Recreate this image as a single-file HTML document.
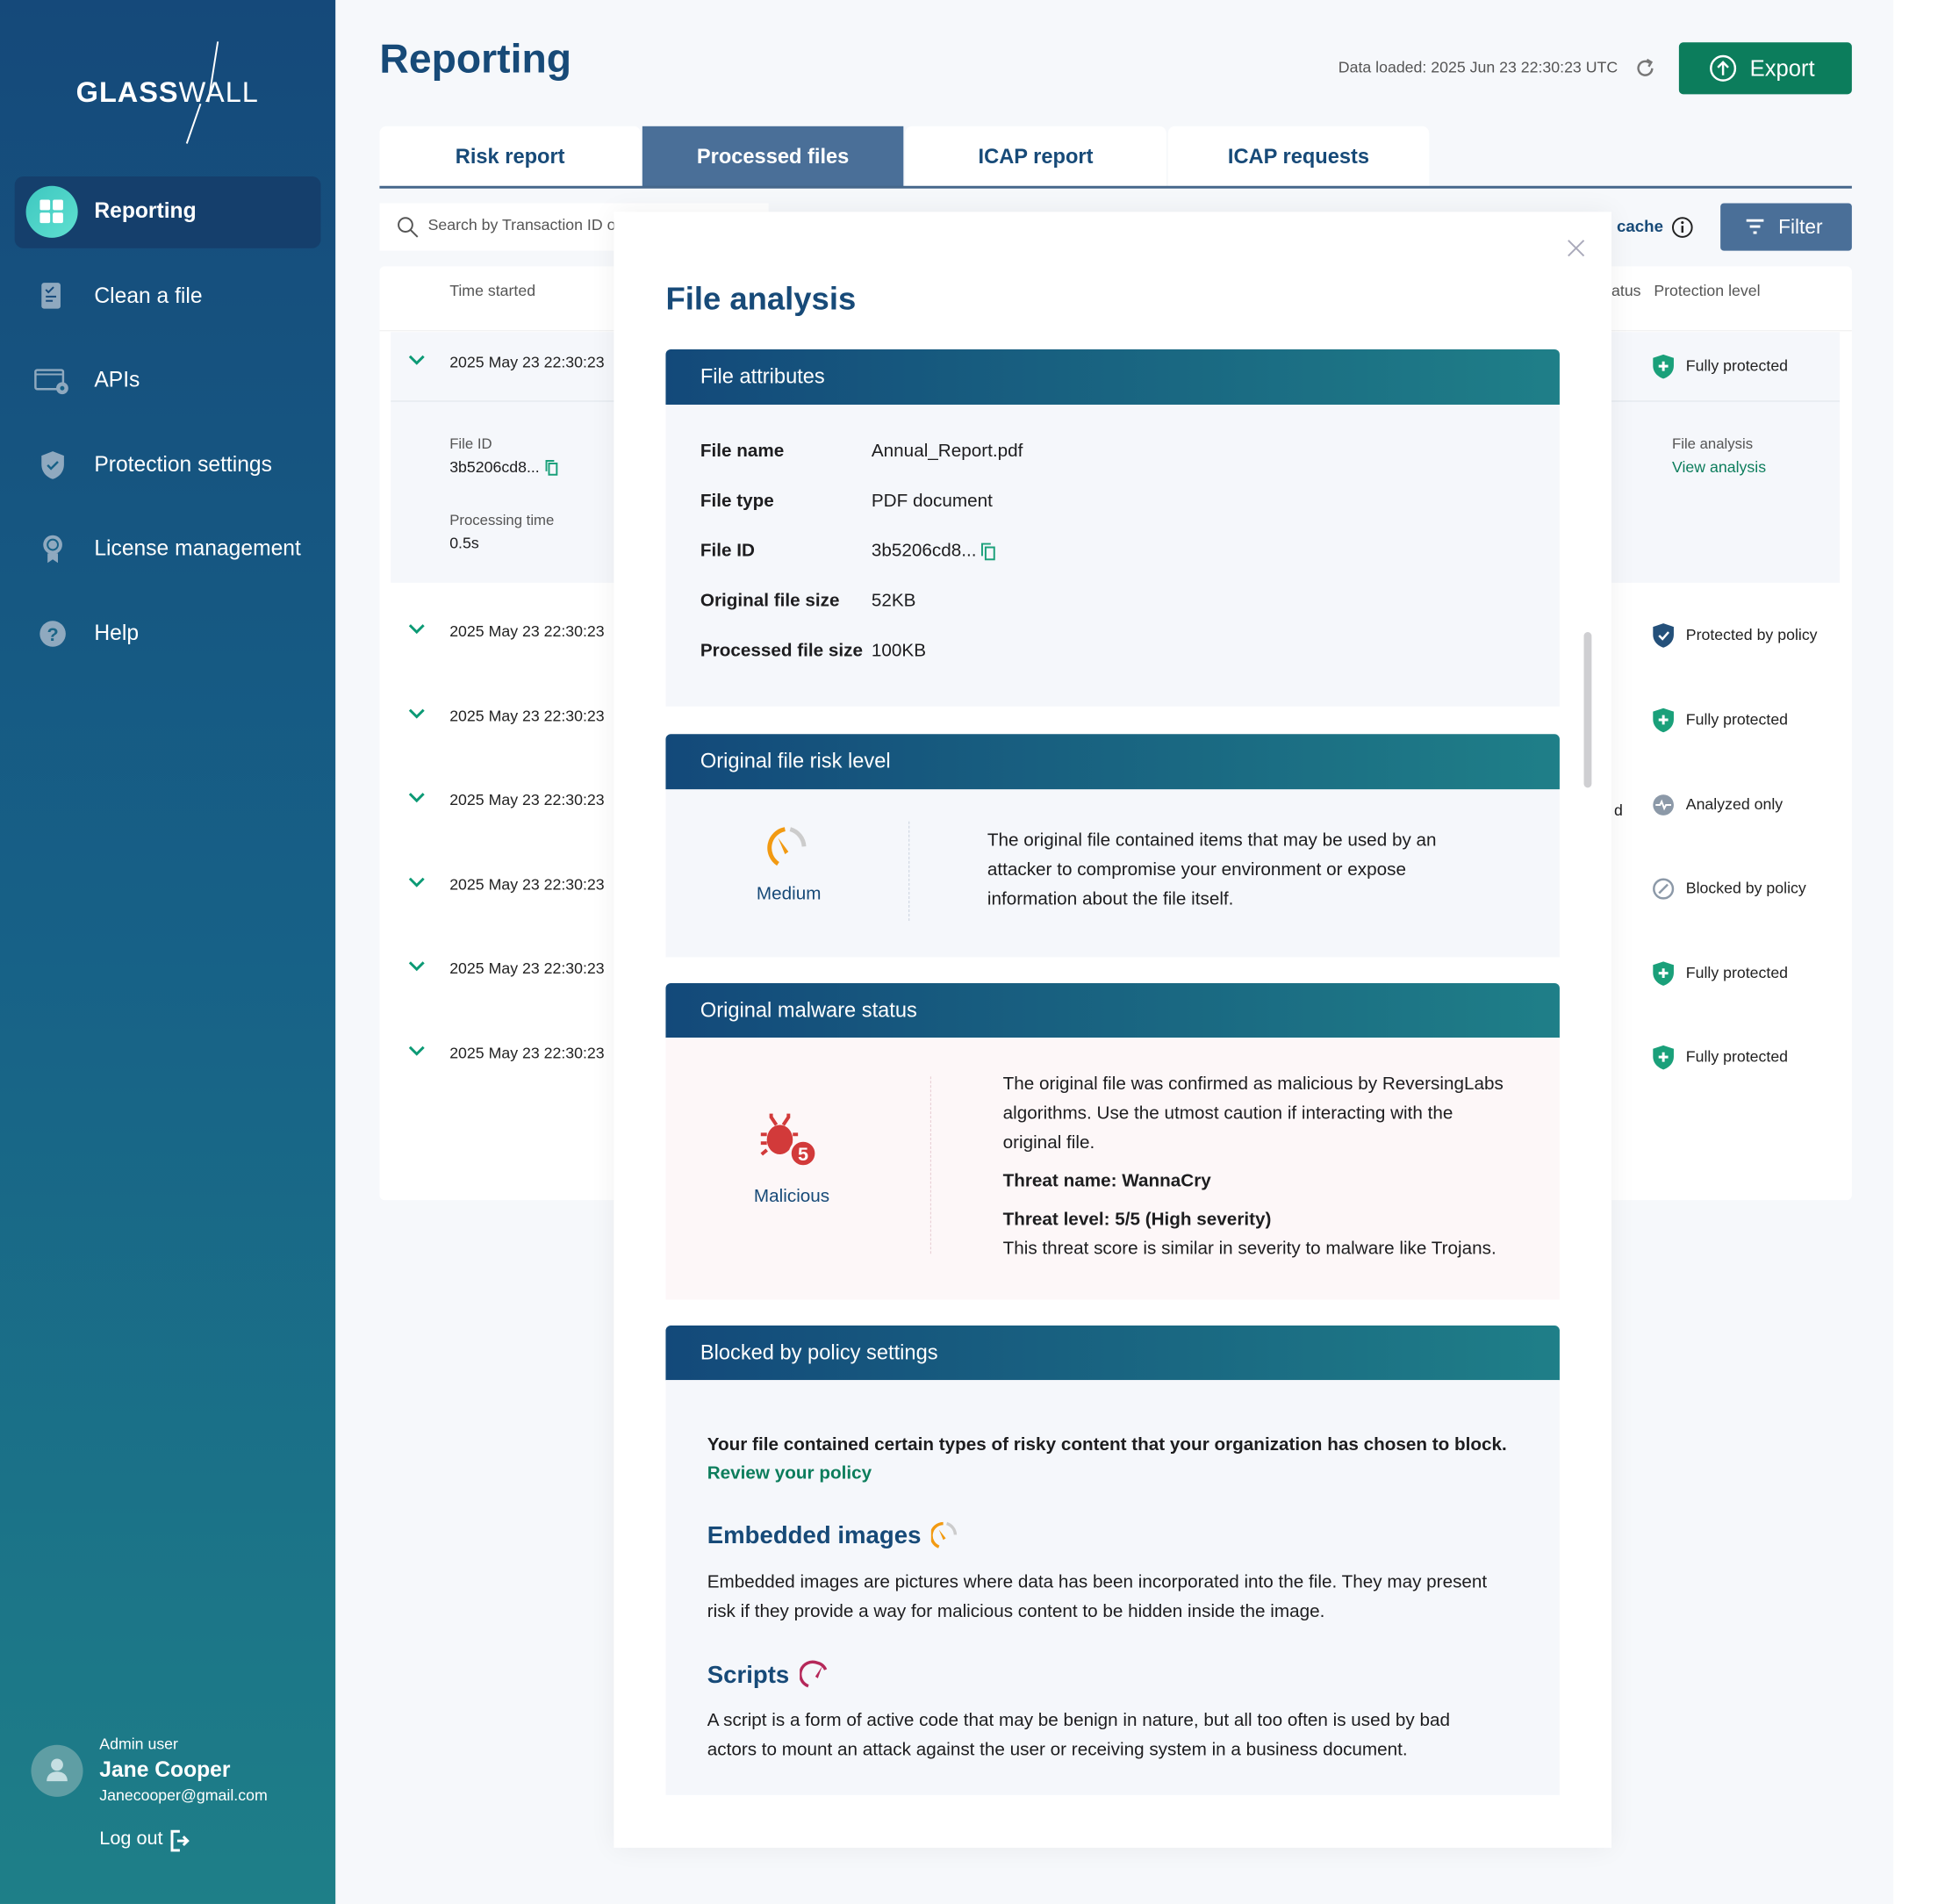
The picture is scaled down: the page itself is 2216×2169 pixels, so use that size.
<!DOCTYPE html>
<html><head><meta charset="utf-8"><style>
*{box-sizing:border-box;margin:0;padding:0}
body{width:2216px;height:2168px;position:relative;overflow:hidden;background:#fff;font-family:"Liberation Sans",sans-serif;color:#1d1d1f}
#wrap{position:absolute;left:0;top:0;width:2250px;height:2202px;transform:scale(0.985);transform-origin:0 0}
.a{position:absolute}
#main{left:388px;top:0;width:1802px;height:2202px;background:#f6f8fb}
#side{left:0;top:0;width:388px;height:2202px;background:linear-gradient(180deg,#15497a 0%,#176187 50%,#1e7f88 100%)}
.nav{position:absolute;left:0;width:388px;color:#fff;font-size:25px}
.nav .ic{position:absolute;left:44px;top:-18px;width:34px;height:36px}
.nav span{position:absolute;left:109px;top:-15px}
.tab{position:absolute;top:146px;height:70px;width:302px;background:#fff;color:#174a78;font-size:24px;text-align:center;line-height:72px;font-weight:bold;border-radius:8px 8px 0 0}
.row{position:absolute;left:452px;font-size:18px;color:#222}
.row .t{position:absolute;left:68px;top:-11px;white-space:nowrap}
.chev{position:absolute;left:20px;top:-10px;width:20px;height:14px}
.st{position:absolute;left:1910px;font-size:18px;color:#222}
.st svg{position:absolute;left:0;top:-14px}
.st span{position:absolute;left:40px;top:-10px;white-space:nowrap}
.hd{position:absolute;left:770px;width:1034px;height:64px;background:linear-gradient(90deg,#13497a,#1f7f88);color:#fff;font-size:24px;line-height:64px;padding-left:40px;border-radius:6px 6px 0 0}
.bd{position:absolute;left:770px;width:1034px;background:#f5f7fb}
.lb{position:absolute;left:810px;font-size:21px;font-weight:bold}
.vl{position:absolute;left:1008px;font-size:21px}
.p{font-size:21px;line-height:34px}
.h3{display:flex;align-items:center;gap:12px;font-size:28px;font-weight:bold;color:#174a78}
</style></head><body><div id="wrap">
<div class="a" id="main"></div>
<div class="a" id="side">
  <div class="a" style="left:88px;top:88px;color:#fff;font-size:33px;letter-spacing:1px"><b>GLASS</b>WALL</div>
  <svg class="a" style="left:210px;top:48px" width="50" height="120"><line x1="42" y1="0" x2="31" y2="70" stroke="#fff" stroke-width="2"/><line x1="22" y1="72" x2="6" y2="118" stroke="#fff" stroke-width="2"/></svg>
  <div class="a" style="left:17px;top:204px;width:354px;height:83px;background:#153f6c;border-radius:10px"></div>
  <div class="a" style="left:30px;top:215px;width:60px;height:60px;border-radius:50%;background:linear-gradient(135deg,#3ec7c0,#5fe0d0)"></div>
  <svg class="a" style="left:46px;top:231px" width="28" height="28"><rect x="0" y="0" width="12" height="12" rx="2" fill="#fff"/><rect x="15" y="0" width="12" height="12" rx="2" fill="#fff"/><rect x="0" y="15" width="12" height="12" rx="2" fill="#fff"/><rect x="15" y="15" width="12" height="12" rx="2" fill="#fff"/></svg>
  <div class="nav" style="top:245px"><span style="font-weight:bold">Reporting</span></div>
  <div class="nav" style="top:343px"><svg class="ic" viewBox="0 0 34 36"><rect x="4" y="2" width="22" height="30" rx="3" fill="#8fa9bf"/><path d="M9 10l3 3 6-6M9 18h12M9 23h8" stroke="#15497a" stroke-width="2" fill="none"/></svg><span>Clean a file</span></div>
  <div class="nav" style="top:440px"><svg class="ic" viewBox="0 0 40 36" style="left:38px;width:44px"><rect x="1" y="6" width="32" height="22" rx="2" fill="none" stroke="#8fa9bf" stroke-width="2.5"/><line x1="1" y1="11" x2="33" y2="11" stroke="#8fa9bf" stroke-width="2"/><circle cx="32" cy="27" r="7" fill="#8fa9bf"/><circle cx="32" cy="27" r="2.5" fill="#176187"/></svg><span>APIs</span></div>
  <div class="nav" style="top:538px"><svg class="ic" viewBox="0 0 34 36"><path d="M17 2l13 5v10c0 9-6 15-13 17C10 32 4 26 4 17V7z" fill="#8fa9bf"/><path d="M11 18l4 4 8-8" stroke="#176187" stroke-width="2.5" fill="none"/></svg><span>Protection settings</span></div>
  <div class="nav" style="top:635px"><svg class="ic" viewBox="0 0 34 36"><circle cx="17" cy="13" r="11" fill="#8fa9bf"/><circle cx="17" cy="13" r="6" fill="none" stroke="#176187" stroke-width="2"/><path d="M11 23v11l6-4 6 4V23" fill="#8fa9bf"/></svg><span>License management</span></div>
  <div class="nav" style="top:733px"><svg class="ic" viewBox="0 0 34 36"><circle cx="17" cy="18" r="15" fill="#8fa9bf"/><text x="17" y="26" font-size="22" font-weight="bold" text-anchor="middle" fill="#1a6587" font-family="Liberation Sans">?</text></svg><span>Help</span></div>
  <div class="a" style="left:36px;top:2018px;width:60px;height:60px;border-radius:50%;background:#5f9ea4"></div>
  <svg class="a" style="left:52px;top:2032px" width="28" height="30"><circle cx="14" cy="9" r="7" fill="#c6dfe2"/><path d="M2 28c0-8 6-11 12-11s12 3 12 11z" fill="#c6dfe2"/></svg>
  <div class="a" style="left:115px;top:2007px;color:#fff;font-size:18px">Admin user</div>
  <div class="a" style="left:115px;top:2033px;color:#fff;font-size:25px;font-weight:bold">Jane Cooper</div>
  <div class="a" style="left:115px;top:2066px;color:#fff;font-size:18px">Janecooper@gmail.com</div>
  <div class="a" style="left:115px;top:2113px;color:#fff;font-size:22px">Log out</div>
  <svg class="a" style="left:196px;top:2116px" width="24" height="26"><path d="M12 2H3v22h9" stroke="#fff" stroke-width="3" fill="none"/><path d="M9 13h12M16 8l5 5-5 5" stroke="#fff" stroke-width="3" fill="none"/></svg>
</div>

<div class="a" style="left:439px;top:40px;font-size:47px;font-weight:bold;color:#174a78">Reporting</div>
<div class="a" style="left:1548px;top:68px;font-size:18px;color:#555">Data loaded: 2025 Jun 23 22:30:23 UTC</div>
<svg class="a" style="left:1890px;top:66px" width="26" height="26"><path d="M21 13a8 8 0 1 1-3-6.3" stroke="#777" stroke-width="2.5" fill="none"/><path d="M15 3l5 3-3 5" stroke="#777" stroke-width="2.5" fill="none"/></svg>
<div class="a" style="left:1942px;top:49px;width:200px;height:60px;background:#0c7d5c;border-radius:5px;color:#fff;font-size:26px;line-height:60px;padding-left:82px">Export</div>
<svg class="a" style="left:1977px;top:63px" width="32" height="32"><circle cx="16" cy="16" r="14" stroke="#fff" stroke-width="2.5" fill="none"/><path d="M16 24V9M10 15l6-6 6 6" stroke="#fff" stroke-width="2.5" fill="none"/></svg>

<div class="tab" style="left:439px">Risk report</div>
<div class="tab" style="left:743px;background:#4a6f98;color:#fff;border-radius:0">Processed files</div>
<div class="tab" style="left:1047px">ICAP report</div>
<div class="tab" style="left:1351px">ICAP requests</div>
<div class="a" style="left:439px;top:215px;width:1703px;height:3px;background:#46678b"></div>

<div class="a" style="left:439px;top:235px;width:450px;height:55px;background:#fff"></div>
<svg class="a" style="left:458px;top:249px" width="28" height="28"><circle cx="11" cy="11" r="8" stroke="#555" stroke-width="2" fill="none"/><path d="M17 17l8 8" stroke="#555" stroke-width="2"/></svg>
<div class="a" style="left:495px;top:250px;font-size:18px;color:#555">Search by Transaction ID o</div>

<div class="a" style="left:439px;top:308px;width:1703px;height:1080px;background:#fff;border-radius:6px"></div>
<div class="a" style="left:439px;top:382px;width:1703px;height:1px;background:#eee"></div>
<div class="a" style="left:520px;top:326px;font-size:18px;color:#555">Time started</div>
<div class="a" style="left:1864px;top:326px;font-size:18px;color:#555">atus &nbsp;&nbsp;Protection level</div>
<div class="a" style="left:452px;top:384px;width:1676px;height:290px;background:#f5f7fb"></div>
<div class="a" style="left:452px;top:463px;width:1676px;height:2px;background:#e9edf2"></div>
<div class="a" style="left:520px;top:504px;font-size:17px;color:#555">File ID</div>
<div class="a" style="left:520px;top:530px;font-size:18px">3b5206cd8...</div>
<svg class="a" style="left:630px;top:531px" width="16" height="20"><rect x="5" y="5" width="9" height="13" stroke="#1aa07a" stroke-width="2" fill="none"/><path d="M2 14V2h9" stroke="#1aa07a" stroke-width="2" fill="none"/></svg>
<div class="a" style="left:520px;top:592px;font-size:17px;color:#555">Processing time</div>
<div class="a" style="left:520px;top:618px;font-size:18px">0.5s</div>
<div class="a" style="left:1934px;top:504px;font-size:17px;color:#555">File analysis</div>
<div class="a" style="left:1934px;top:530px;font-size:18px;color:#0c7d5c">View analysis</div>

<div class="row" style="top:420px"><svg class="chev"><path d="M2 2l8 8 8-8" stroke="#0c9a75" stroke-width="3" fill="none"/></svg><span class="t">2025 May 23 22:30:23</span></div>
<div class="row" style="top:731px"><svg class="chev"><path d="M2 2l8 8 8-8" stroke="#0c9a75" stroke-width="3" fill="none"/></svg><span class="t">2025 May 23 22:30:23</span></div>
<div class="row" style="top:829px"><svg class="chev"><path d="M2 2l8 8 8-8" stroke="#0c9a75" stroke-width="3" fill="none"/></svg><span class="t">2025 May 23 22:30:23</span></div>
<div class="row" style="top:926px"><svg class="chev"><path d="M2 2l8 8 8-8" stroke="#0c9a75" stroke-width="3" fill="none"/></svg><span class="t">2025 May 23 22:30:23</span></div>
<div class="row" style="top:1024px"><svg class="chev"><path d="M2 2l8 8 8-8" stroke="#0c9a75" stroke-width="3" fill="none"/></svg><span class="t">2025 May 23 22:30:23</span></div>
<div class="row" style="top:1121px"><svg class="chev"><path d="M2 2l8 8 8-8" stroke="#0c9a75" stroke-width="3" fill="none"/></svg><span class="t">2025 May 23 22:30:23</span></div>
<div class="row" style="top:1219px"><svg class="chev"><path d="M2 2l8 8 8-8" stroke="#0c9a75" stroke-width="3" fill="none"/></svg><span class="t">2025 May 23 22:30:23</span></div>

<div class="st" style="top:423px"><svg width="28" height="30"><path d="M14 1l12 4v9c0 8-6 13-12 15C8 27 2 22 2 14V5z" fill="#1aa07a"/><path d="M14 9v11M8.5 14.5h11" stroke="#fff" stroke-width="3"/></svg><span>Fully protected</span></div>
<div class="st" style="top:734px"><svg width="28" height="30"><path d="M14 1l12 4v9c0 8-6 13-12 15C8 27 2 22 2 14V5z" fill="#24507a"/><path d="M9 15l4 4 7-8" stroke="#fff" stroke-width="2.5" fill="none"/></svg><span>Protected by policy</span></div>
<div class="st" style="top:832px"><svg width="28" height="30"><path d="M14 1l12 4v9c0 8-6 13-12 15C8 27 2 22 2 14V5z" fill="#1aa07a"/><path d="M14 9v11M8.5 14.5h11" stroke="#fff" stroke-width="3"/></svg><span>Fully protected</span></div>
<div class="st" style="top:930px"><svg width="28" height="30"><circle cx="14" cy="15" r="12" fill="#8c99a8"/><path d="M5 15h5l2-4 3 8 2-4h6" stroke="#fff" stroke-width="2" fill="none"/></svg><span>Analyzed only</span></div>
<div class="st" style="top:1027px"><svg width="28" height="30"><circle cx="14" cy="15" r="11" stroke="#8c99a8" stroke-width="2.5" fill="none"/><path d="M9 20l10-10" stroke="#8c99a8" stroke-width="2.5"/></svg><span>Blocked by policy</span></div>
<div class="st" style="top:1125px"><svg width="28" height="30"><path d="M14 1l12 4v9c0 8-6 13-12 15C8 27 2 22 2 14V5z" fill="#1aa07a"/><path d="M14 9v11M8.5 14.5h11" stroke="#fff" stroke-width="3"/></svg><span>Fully protected</span></div>
<div class="st" style="top:1222px"><svg width="28" height="30"><path d="M14 1l12 4v9c0 8-6 13-12 15C8 27 2 22 2 14V5z" fill="#1aa07a"/><path d="M14 9v11M8.5 14.5h11" stroke="#fff" stroke-width="3"/></svg><span>Fully protected</span></div>
<div class="a" style="left:1867px;top:927px;font-size:18px">d</div>

<div class="a" style="left:1870px;top:252px;font-size:19px;font-weight:bold;color:#174a78">cache</div>
<svg class="a" style="left:1933px;top:250px" width="26" height="26"><circle cx="13" cy="13" r="11" stroke="#222" stroke-width="2" fill="none"/><path d="M13 11v8" stroke="#222" stroke-width="2.5"/><circle cx="13" cy="7.5" r="1.6" fill="#222"/></svg>
<div class="a" style="left:1990px;top:235px;width:152px;height:55px;background:#4a6f98;border-radius:4px;color:#fff;font-size:23px;line-height:55px;padding-left:67px">Filter</div>
<svg class="a" style="left:2018px;top:252px" width="24" height="22"><path d="M2 3h20M6 10h12M10 17h4" stroke="#fff" stroke-width="3"/></svg>

<!-- modal -->
<div class="a" style="left:710px;top:245px;width:1154px;height:1892px;background:#fff;box-shadow:0 0 30px rgba(0,0,0,0.06)"></div>
<svg class="a" style="left:1812px;top:276px" width="22" height="22"><path d="M2 2l18 18M20 2L2 20" stroke="#aab" stroke-width="2"/></svg>
<div class="a" style="left:1832px;top:731px;width:9px;height:180px;background:#cfcfd2;border-radius:5px"></div>
<div class="a" style="left:770px;top:325px;font-size:37px;font-weight:bold;color:#174a78">File analysis</div>

<div class="hd" style="top:404px">File attributes</div>
<div class="bd" style="top:468px;height:349px"></div>
<div class="lb" style="top:510px">File name</div><div class="vl" style="top:510px">Annual_Report.pdf</div>
<div class="lb" style="top:568px">File type</div><div class="vl" style="top:568px">PDF document</div>
<div class="lb" style="top:625px">File ID</div><div class="vl" style="top:625px">3b5206cd8...</div>
<svg class="a" style="left:1134px;top:627px" width="18" height="22"><rect x="6" y="6" width="10" height="14" stroke="#1aa07a" stroke-width="2" fill="none"/><path d="M2 16V2h10" stroke="#1aa07a" stroke-width="2" fill="none"/></svg>
<div class="lb" style="top:683px">Original file size</div><div class="vl" style="top:683px">52KB</div>
<div class="lb" style="top:741px">Processed file size</div><div class="vl" style="top:741px">100KB</div>

<div class="hd" style="top:849px">Original file risk level</div>
<div class="bd" style="top:913px;height:194px"></div>
<svg class="a" style="left:886px;top:955px" width="50" height="54"><path d="M28 4A22 22 0 0 1 44 24" stroke="#ccc" stroke-width="5" fill="none"/><path d="M22 4A22 22 0 0 0 14 44" stroke="#f29a12" stroke-width="5" fill="none"/><path d="M14 14l12 16-4 3z" fill="#f29a12"/></svg>
<div class="a" style="left:875px;top:1022px;font-size:21px;color:#174a78">Medium</div>
<div class="a" style="left:1051px;top:950px;height:115px;border-left:1.5px dashed #c9d2de"></div>
<div class="a p" style="left:1142px;top:955px;width:540px">The original file contained items that may be used by an attacker to compromise your environment or expose information about the file itself.</div>

<div class="hd" style="top:1137px">Original malware status</div>
<div class="bd" style="top:1200px;height:303px;background:#fdf7f8"></div>
<svg class="a" style="left:878px;top:1286px" width="72" height="70"><path d="M14 6l6 9M34 6l-6 9M14 2v5M34 2v5" stroke="#d23a3a" stroke-width="4" fill="none"/><ellipse cx="24" cy="32" rx="15" ry="17" fill="#d23a3a"/><path d="M9 26H2M9 36H2M9 44l-6 5M39 26h6" stroke="#d23a3a" stroke-width="4"/><circle cx="51" cy="48" r="15" fill="#d23a3a" stroke="#fdf7f8" stroke-width="3"/><text x="51" y="56" font-size="22" font-weight="bold" fill="#fff" text-anchor="middle" font-family="Liberation Sans">5</text></svg>
<div class="a" style="left:872px;top:1372px;font-size:21px;color:#174a78">Malicious</div>
<div class="a" style="left:1076px;top:1245px;height:205px;border-left:1.5px dashed #e5c9cf"></div>
<div class="a p" style="left:1160px;top:1237px;width:580px">The original file was confirmed as malicious by ReversingLabs algorithms. Use the utmost caution if interacting with the original file.</div>
<div class="a" style="left:1160px;top:1354px;font-size:21px;font-weight:bold">Threat name: WannaCry</div>
<div class="a" style="left:1160px;top:1399px;font-size:21px;font-weight:bold">Threat level: 5/5 (High severity)</div>
<div class="a" style="left:1160px;top:1432px;font-size:21px">This threat score is similar in severity to malware like Trojans.</div>

<div class="hd" style="top:1533px">Blocked by policy settings</div>
<div class="bd" style="top:1596px;height:480px"></div>
<div class="a" style="left:818px;top:1659px;font-size:21px;font-weight:bold">Your file contained certain types of risky content that your organization has chosen to block.</div>
<div class="a" style="left:818px;top:1692px;font-size:21px;font-weight:bold;color:#0c7d5c">Review your policy</div>
<div class="a h3" style="left:818px;top:1759px">Embedded images <svg width="32" height="34"><path d="M18 3A14 14 0 0 1 28 16" stroke="#ccc" stroke-width="3.5" fill="none"/><path d="M14 3A14 14 0 0 0 9 30" stroke="#f29a12" stroke-width="3.5" fill="none"/><path d="M9 10l8 10-3 2z" fill="#f29a12"/></svg></div>
<div class="a p" style="left:818px;top:1813px;width:910px">Embedded images are pictures where data has been incorporated into the file. They may present risk if they provide a way for malicious content to be hidden inside the image.</div>
<div class="a h3" style="left:818px;top:1919px">Scripts <svg width="34" height="36"><path d="M10 31A14 14 0 0 1 20 4A14 14 0 0 1 30 12" stroke="#b5285a" stroke-width="3.5" fill="none"/><path d="M26 8l-8 12 3 2z" fill="#b5285a"/></svg></div>
<div class="a p" style="left:818px;top:1973px;width:910px">A script is a form of active code that may be benign in nature, but all too often is used by bad actors to mount an attack against the user or receiving system in a business document.</div>
</div></body></html>
